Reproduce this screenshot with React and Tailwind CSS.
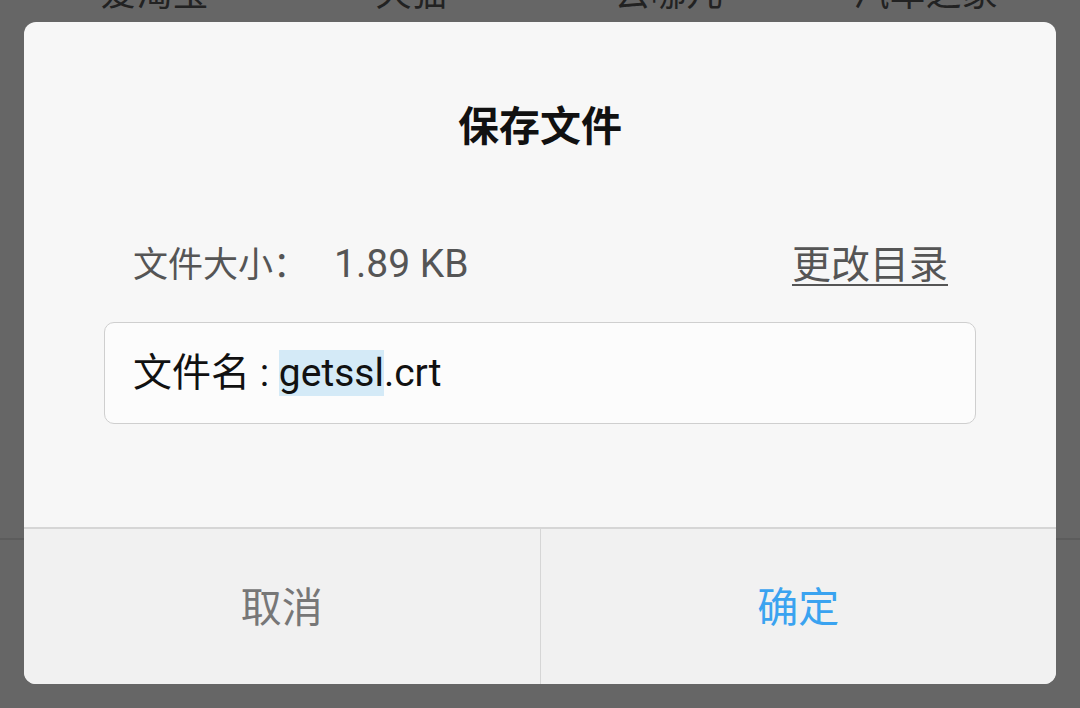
const font = { fontFamily: 'Roboto, "Noto Sans CJK SC", sans-serif' }

export default function App() {
  const behind = ['爱淘宝', '天猫', '去哪儿', '汽车之家']

  return (
    <div className="relative w-[1080px] h-[708px] overflow-hidden bg-[#666666]" style={font}>
      {/* dimmed page under the dialog */}
      <div className="grid grid-cols-4 px-[26px] -mt-[26px] h-[566px] border-b-2 border-[#5c5c5c]">
        {behind.map((t) => (
          <div key={t} className="text-center text-[36px] leading-[40px] text-[#222222]">{t}</div>
        ))}
      </div>

      <div className="absolute left-[24px] top-[22px] w-[1032px] h-[662px] rounded-[12px] bg-[#f7f7f7] overflow-hidden flex flex-col">
        <div className="pt-[81px] text-center text-[41px] leading-[48px] font-bold text-[#111111]">保存文件</div>

        <div className="mt-[91px] flex items-center justify-between pl-[109px] pr-[108px] leading-[44px] text-[#555555]">
          <span className="text-[35px]">
            文件大小：<span className="ml-[26px] text-[39px]">1.89 KB</span>
          </span>
          <span className="text-[39px] underline underline-offset-[6px] decoration-2">更改目录</span>
        </div>

        <div className="mt-[34px] mx-[80px] h-[102px] flex items-center pl-[28px] rounded-[10px] border border-[#cfcfcf] bg-[#fcfcfc] text-[39px] text-[#111111]">
          <span className="whitespace-pre">
            文件名 : <span className="bg-[#d4eaf7]">getssl</span>.crt
          </span>
        </div>

        <div className="flex-1" />

        <div className="h-[157px] flex border-t-2 border-[#d6d6d6] bg-[#f1f1f1] text-[41px]">
          <button className="flex-1 pt-[4px] text-[#777777] border-r border-[#d6d6d6]">取消</button>
          <button className="flex-1 pt-[4px] text-[#3aa3f0]">确定</button>
        </div>
      </div>
    </div>
  )
}
